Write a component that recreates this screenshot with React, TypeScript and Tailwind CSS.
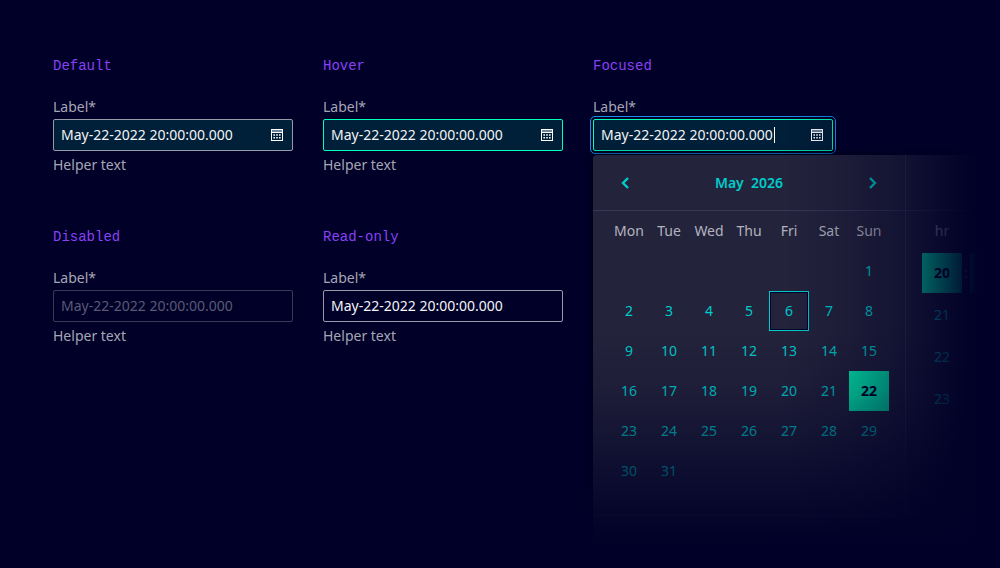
import React, { useId } from "react";

interface DateFieldProps {
  title: string;
  variant?: "default" | "hover" | "focused" | "disabled" | "readonly";
  helper?: boolean;
}

const DAYS = ["Mon", "Tue", "Wed", "Thu", "Fri", "Sat", "Sun"];
const HOURS = [20, 21, 22, 23];
const TODAY = 6;
const SELECTED = 22;
const SELECTED_HOUR = 20;

const boxStyles = {
  default: "bg-[#001f39] border-[#9999a9]",
  hover: "bg-[#001f39] border-[#00ffb9]",
  focused: "bg-[#001f39] border-[#00ffb9] outline outline-offset-2 outline-[#1491eb]",
  disabled: "border-[#3a3a57]",
  readonly: "border-[#9999a9]",
};

const CalendarIcon = () => (
  <svg width="12" height="12" viewBox="0 0 12 12" fill="none">
    <path fill="#ffffff" fillRule="evenodd" d="M0 0h12v12H0zM1 4v7h10V4z" />
    <path fill="#6f8697" d="M1 1h10v2H1z" />
    <path
      fill="#ffffff"
      d="M2.4 5.2h1.6v1.5H2.4zM5.2 5.2h1.6v1.5H5.2zM8 5.2h1.6v1.5H8zM2.4 7.9h1.6v1.5H2.4zM5.2 7.9h1.6v1.5H5.2zM8 7.9h1.6v1.5H8z"
    />
  </svg>
);

const Chevron = ({ right = false }: { right?: boolean }) => (
  <svg width="8" height="12" viewBox="0 0 8 12" fill="none" stroke="currentColor" strokeWidth="2.4">
    <path d={right ? "M1 1l5 5-5 5" : "M7 1L2 6l5 5"} />
  </svg>
);

const DateField: React.FC<DateFieldProps> = ({ title, variant = "default", helper = true }) => {
  const id = useId();
  const editable = variant !== "disabled" && variant !== "readonly";

  return (
    <section className="w-60">
      <h2 className="font-['Liberation_Mono',monospace] text-sm leading-5 text-[#8a41f5]">{title}</h2>
      <label htmlFor={id} className="mt-[21px] block leading-5 text-[#a6a6b4]">
        Label*
      </label>
      <div className={`mt-0.5 flex h-8 items-center rounded-xs border px-[7px] ${boxStyles[variant]}`}>
        <div className="relative min-w-0 flex-1">
          <input
            id={id}
            type="text"
            defaultValue="May-22-2022 20:00:00.000"
            disabled={variant === "disabled"}
            readOnly={variant === "readonly"}
            className="block w-full bg-transparent leading-5 text-[#f2f4f6] outline-none disabled:text-[#5a5a75]"
          />
          {/* Text caret */}
          {variant === "focused" && <span className="absolute top-0.5 left-[173px] h-4 w-px bg-white" />}
        </div>
        {editable && (
          <button type="button" aria-label="Open calendar" className="mr-0.5">
            <CalendarIcon />
          </button>
        )}
      </div>
      {helper && <p className="mt-1 leading-5 text-[#a6a6b4]">Helper text</p>}
    </section>
  );
};

const MonthView = () => {
  // The month starts on a Sunday, so the first row has six blanks
  const cells = [...Array(6).fill(null), ...Array.from({ length: 31 }, (_, i) => i + 1)];
  const weeks = Array.from({ length: 6 }, (_, w) => cells.slice(w * 7, w * 7 + 7));

  return (
    <div className="w-[313px] shrink-0 border-r border-[#37375a] pb-6">
      <div className="flex h-14 items-center justify-between border-b border-[#37375a] px-7 text-[#00cccc]">
        <button type="button" aria-label="Previous month">
          <Chevron />
        </button>
        <span className="font-semibold whitespace-pre">May  2026</span>
        <button type="button" aria-label="Next month">
          <Chevron right />
        </button>
      </div>
      <table className="ml-4 w-70 table-fixed border-collapse text-center">
        <thead>
          <tr className="h-10">
            {DAYS.map((d) => (
              <th key={d} className="p-0 font-normal text-[#b3b3be]">{d}</th>
            ))}
          </tr>
        </thead>
        <tbody>
          {weeks.map((week, w) => (
            <tr key={w} className="h-10">
              {week.map((day, i) => (
                <td key={i} className="p-0">
                  {day && (
                    <button
                      type="button"
                      className={`block size-10 ${
                        day === SELECTED
                          ? "bg-[#00ffb9] font-bold text-[#000028]"
                          : day === TODAY
                            ? "border border-[#00cccc] text-[#00cccc] inset-ring inset-ring-[#000028]"
                            : "text-[#00cccc]"
                      }`}
                    >
                      {day}
                    </button>
                  )}
                </td>
              ))}
            </tr>
          ))}
        </tbody>
      </table>
    </div>
  );
};

const TimeView = () => (
  <div className="min-w-0 flex-1 overflow-hidden">
    <div className="h-14 border-b border-[#37375a]" />
    <div className="ml-4 flex gap-2">
      <div className="flex w-10 shrink-0 flex-col gap-0.5 text-center">
        <span className="leading-10 text-[#b3b3be]">hr</span>
        {HOURS.map((h) => (
          <button
            key={h}
            type="button"
            className={`h-10 ${h === SELECTED_HOUR ? "bg-[#00ffb9] font-bold text-[#000028]" : "text-[#00cccc]"}`}
          >
            {h}
          </button>
        ))}
      </div>
      <div className="relative mt-[42px] h-10 w-10 shrink-0 bg-[#00ffb9]">
        <span className="absolute -left-1.5 leading-10 text-[#b3b3be]">:</span>
      </div>
    </div>
  </div>
);

const Calendar = () => (
  <div className="relative mt-1">
    <div className="h-[387px] rounded-tl-sm bg-[#23233c] shadow-[0_0_8px_#000010]">
      <div className="flex border-b border-[#37375a]">
        <MonthView />
        <TimeView />
      </div>
    </div>
    {/* Bottom fade */}
    <div className="pointer-events-none absolute -inset-x-3 top-0 -bottom-3 bg-[linear-gradient(to_bottom,#00002800_175px,#0000282b_236px,#00002866_276px,#0000289e_316px,#000028d4_359px,#000028_387px)]" />
  </div>
);

const App = () => (
  <main className="min-h-screen overflow-hidden bg-[#000028] pt-14 pl-[53px] font-['Noto_Sans',sans-serif] text-sm">
    <div className="flex items-start gap-[30px]">
      <div className="grid grid-cols-2 gap-x-[30px] gap-y-[52px]">
        <DateField title="Default" />
        <DateField title="Hover" variant="hover" />
        <DateField title="Disabled" variant="disabled" />
        <DateField title="Read-only" variant="readonly" />
      </div>
      <div className="relative min-w-0 flex-1">
        <DateField title="Focused" variant="focused" helper={false} />
        <Calendar />
        {/* Right fade */}
        <div className="pointer-events-none absolute inset-0 bg-[linear-gradient(to_right,#00002800_190px,#00002833_256px,#00002866_296px,#0000289e_329px,#000028e6_369px,#000028_385px)]" />
      </div>
    </div>
  </main>
);

export default App;
